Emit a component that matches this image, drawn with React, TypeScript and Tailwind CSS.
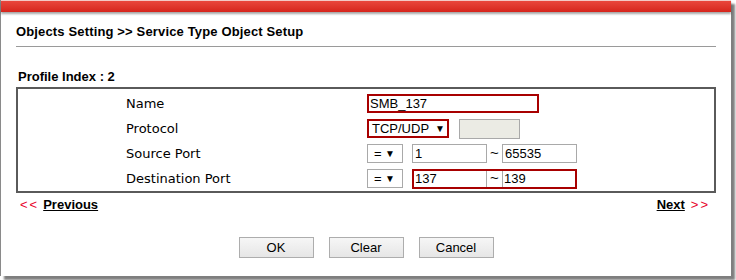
import React from "react";

const arial = { fontFamily: '"Liberation Sans", Arial, sans-serif' };
const deja = { fontFamily: '"DejaVu Sans", Verdana, sans-serif' };

const Arrow: React.FC = () => (
  <span className="text-[10px] leading-none text-black">▼</span>
);

const SmallSelect: React.FC = () => (
  <div className="flex h-[19px] w-[36px] items-center justify-between border border-[#a9a9a9] bg-white pl-[6px] pr-[7px] text-[13px]">
    <span>=</span>
    <Arrow />
  </div>
);

const Button: React.FC<{ label: string }> = ({ label }) => (
  <button className="flex h-[21px] w-[75px] items-center justify-center border border-[#adadad] bg-linear-to-b from-[#f6f6f6] to-[#e6e6e6] text-[13px] text-black">
    {label}
  </button>
);

const App: React.FC = () => {
  return (
    <div className="relative h-[280px] w-[736px] overflow-hidden bg-white" style={arial}>
      <div className="relative h-[276px] w-[731px] border-l border-[#8a8a8a] bg-white shadow-[4px_4px_2px_rgba(0,0,0,0.5)]">
        {/* top red bar */}
        <div className="h-[12px] w-full border-t border-[#f3c9c6] bg-linear-to-b from-[#e9463c] to-[#d6241b] shadow-[0_2px_2px_rgba(0,0,0,0.35)]" />

        <div className="pl-[15px] pr-[15px]">
          <div className="pt-[12px] text-[13px] font-bold leading-[16px] tracking-[0.15px] text-black">
            Objects Setting &gt;&gt; Service Type Object Setup
          </div>
          <div className="mt-[6px] h-px w-[700px] bg-[#9a9a9a]" />

          <div className="pl-[2px] pt-[22px] text-[13px] font-bold leading-[16px] text-black">
            Profile Index : 2
          </div>

          <div className="mt-[2px] w-[700px] border-2 border-[#5a5a5a] pt-[2px]">
            {/* Name */}
            <div className="flex h-[25px] items-center">
              <div className="w-[349px] pl-[108px] text-[13px] text-black" style={deja}>Name</div>
              <div className="flex h-[19px] w-[172px] items-center border-2 border-[#a80000] bg-white pl-px text-[13px] text-black">
                SMB_137
              </div>
            </div>
            {/* Protocol */}
            <div className="flex h-[25px] items-center">
              <div className="w-[349px] pl-[108px] text-[13px] text-black" style={deja}>Protocol</div>
              <div className="flex h-[19px] w-[82px] items-center gap-[6px] border-2 border-[#a80000] bg-white pl-[3px] text-[13px] text-black">
                <span>TCP/UDP</span>
                <Arrow />
              </div>
              <div className="ml-[10px] h-[20px] w-[61px] border border-[#a9a9a9] bg-[#ebebe4]" />
            </div>
            {/* Source Port */}
            <div className="flex h-[25px] items-center">
              <div className="w-[349px] pl-[108px] text-[13px] text-black" style={deja}>Source Port</div>
              <SmallSelect />
              <div className="ml-[9px] flex h-[19px] w-[75px] items-center border border-[#a9a9a9] pl-[2px] text-[13px]">1</div>
              <div className="flex w-[15px] justify-center text-[15px]">~</div>
              <div className="flex h-[19px] w-[75px] items-center border border-[#a9a9a9] pl-[2px] text-[13px]">65535</div>
            </div>
            {/* Destination Port */}
            <div className="flex h-[25px] items-center">
              <div className="w-[349px] pl-[108px] text-[13px] text-black" style={deja}>Destination Port</div>
              <SmallSelect />
              <div className="ml-[9px] flex h-[20px] w-[165px] items-center border-2 border-[#a80000]">
                <div className="flex h-full w-[73px] items-center border-r border-[#a9a9a9] pl-px text-[13px]">137</div>
                <div className="flex w-[15px] justify-center text-[15px]">~</div>
                <div className="flex h-full flex-1 items-center border-l border-[#a9a9a9] pl-px text-[13px]">139</div>
              </div>
            </div>
          </div>

          <div className="mt-[4px] flex w-[700px] items-center justify-between text-[13px] leading-[16px]">
            <div className="flex items-center pl-[4px]">
              <span className="tracking-[2px] text-[#e8002a]">&lt;&lt;</span>
              <span className="ml-[4px] font-bold text-black underline">Previous</span>
            </div>
            <div className="flex items-center pr-[6px]">
              <span className="font-bold text-black underline">Next</span>
              <span className="ml-[6px] tracking-[2px] text-[#e8002a]">&gt;&gt;</span>
            </div>
          </div>

          <div className="mt-[24px] flex w-[700px] justify-center gap-[15px]">
            <Button label="OK" />
            <Button label="Clear" />
            <Button label="Cancel" />
          </div>
        </div>
      </div>
    </div>
  );
};

export default App;
